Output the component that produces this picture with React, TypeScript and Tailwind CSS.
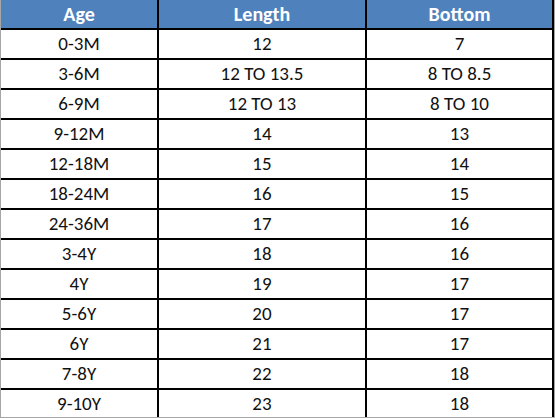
import React from "react";

const rows: [string, string, string][] = [
  ["0-3M", "12", "7"],
  ["3-6M", "12 TO 13.5", "8 TO 8.5"],
  ["6-9M", "12 TO 13", "8 TO 10"],
  ["9-12M", "14", "13"],
  ["12-18M", "15", "14"],
  ["18-24M", "16", "15"],
  ["24-36M", "17", "16"],
  ["3-4Y", "18", "16"],
  ["4Y", "19", "17"],
  ["5-6Y", "20", "17"],
  ["6Y", "21", "17"],
  ["7-8Y", "22", "18"],
  ["9-10Y", "23", "18"],
];

export default function App() {
  return (
    <div
      className="w-[555px] h-[418px] bg-white border-l border-r border-b border-[#a6a6a6] flex flex-col overflow-hidden"
      style={{ fontFamily: "Carlito, Lato, 'Open Sans', sans-serif" }}
    >
      <div className="flex h-[30px] shrink-0 bg-[#4f81bd] text-white font-bold text-[20px] border-b-2 border-black">
        <div className="w-[158px] border-r-2 border-black flex items-center justify-center">Age</div>
        <div className="w-[208px] border-r-2 border-black flex items-center justify-center">Length</div>
        <div className="w-[187px] border-r-2 border-black flex items-center justify-center">Bottom</div>
      </div>
      {rows.map((r, i) => (
        <div
          key={i}
          className={`flex shrink-0 text-[19px] text-[#111] ${i === rows.length - 1 ? "flex-1" : "h-[30px] border-b-2 border-black"}`}
        >
          <div className="w-[158px] border-r-2 border-black flex items-center justify-center">{r[0]}</div>
          <div className="w-[208px] border-r-2 border-black flex items-center justify-center">{r[1]}</div>
          <div className="w-[187px] border-r-2 border-black flex items-center justify-center">{r[2]}</div>
        </div>
      ))}
    </div>
  );
}
